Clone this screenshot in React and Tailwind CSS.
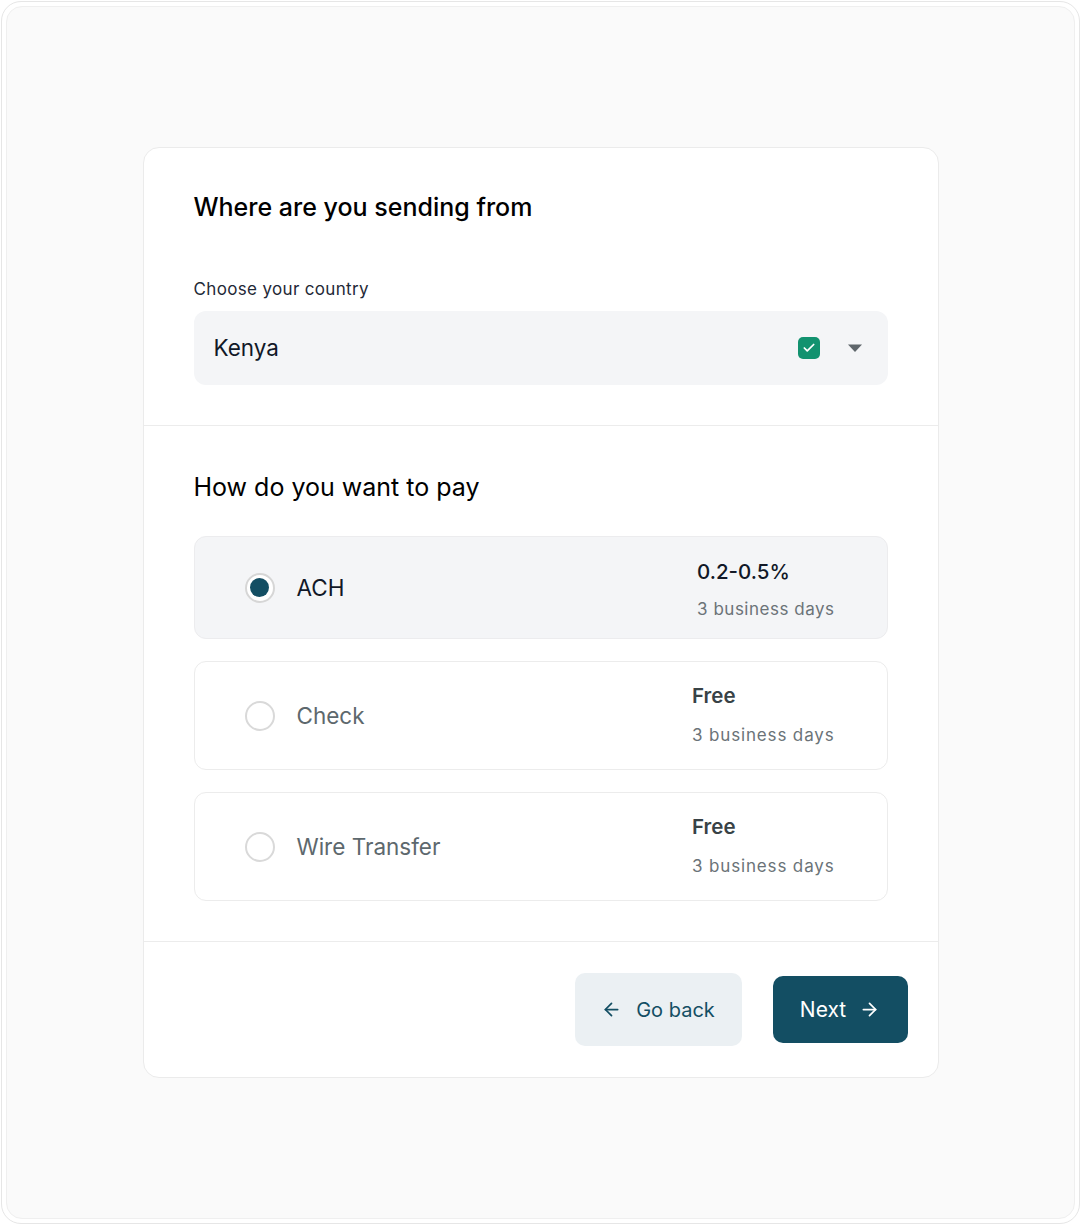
import { ArrowLeft, ArrowRight, Check } from 'lucide-react'

const METHODS = [
  { id: 'ach', label: 'ACH', fee: '0.2-0.5%', days: '3 business days', selected: true },
  { id: 'check', label: 'Check', fee: 'Free', days: '3 business days' },
  { id: 'wire', label: 'Wire Transfer', fee: 'Free', days: '3 business days' },
]

function Radio({ on }) {
  if (on) {
    return (
      <span className="flex items-center justify-center w-[30px] h-[30px] rounded-full border-2 border-[#d6d6d6] bg-white">
        <span className="w-[19px] h-[19px] rounded-full bg-[#134e63]" />
      </span>
    )
  }
  return <span className="w-[30px] h-[30px] rounded-full border-2 border-[#d9d9d9] bg-white" />
}

function MethodRow({ m }) {
  return (
    <div
      className={`flex items-center pl-[50px] pr-[52px] rounded-xl border ${
        m.selected ? 'h-[103px] bg-[#f4f5f7] border-[#ececee]' : 'h-[109px] bg-white border-[#ececec]'
      }`}
    >
      <Radio on={m.selected} />
      <span className={`ml-[22px] text-[22.5px] ${m.selected ? 'text-[#111827]' : 'text-[#5d686d]'}`}>
        {m.label}
      </span>
      <div className="flex-1" />
      <div className={`flex flex-col items-start whitespace-nowrap ${m.selected ? 'pt-[5px]' : ''}`}>
        <span
          className={`text-[20.5px] leading-[28px] ${
            m.selected ? 'text-[#111827] font-medium' : 'text-[#384246] font-semibold'
          }`}
        >
          {m.fee}
        </span>
        <span
          className={`text-[17px] text-[#6b7378] ${
            m.selected ? 'mt-[11px] tracking-[0.03em]' : 'mt-[13px] tracking-[0.05em]'
          }`}
        >
          {m.days}
        </span>
      </div>
    </div>
  )
}

export default function App() {
  return (
    <div className="w-[1081px] h-[1225px] bg-white p-[1px]" style={{ fontFamily: 'Inter, "Noto Sans", sans-serif' }}>
      <div className="h-full rounded-[20px] border border-[#e6e6e6] p-[4px] bg-white">
        <div className="h-full rounded-[16px] border border-[#efefef] bg-[#fafafa] flex items-center justify-center">
          {/* card */}
          <div className="w-[796px] bg-white rounded-[16px] border border-[#ebebeb] flex flex-col">

            {/* country */}
            <section className="px-[50px] pt-[43px] pb-[40px] border-b border-[#ececec]">
              <h2 className="text-[25px] leading-[32px] font-medium text-black">Where are you sending from</h2>
              <p className="mt-[55px] text-[17px] leading-[22px] tracking-[0.02em] text-[#1f2937]">Choose your country</p>
              <div className="mt-[11px] h-[74px] rounded-xl bg-[#f4f5f7] flex items-center pl-[20px] pr-[25px]">
                <span className="text-[22.5px] text-[#111827]">Kenya</span>
                <div className="flex-1" />
                <span className="w-[22px] h-[22px] rounded-[5px] bg-[#12926f] flex items-center justify-center">
                  <Check size={14} strokeWidth={3} className="text-white" />
                </span>
                <svg width="16" height="10" viewBox="0 0 16 10" className="ml-[27px]">
                  <path d="M1 1.5h14L8 9z" fill="#5f666b" />
                </svg>
              </div>
            </section>

            {/* method */}
            <section className="px-[50px] pt-[45px] pb-[40px] border-b border-[#ececec]">
              <h2 className="text-[25px] leading-[32px] text-black">How do you want to pay</h2>
              <div className="mt-[33px] flex flex-col gap-[22px]">
                {METHODS.map(m => <MethodRow key={m.id} m={m} />)}
              </div>
            </section>

            {/* footer */}
            <footer className="h-[135px] flex items-center justify-end pr-[30px] gap-[31px]">
              <button className="h-[73px] w-[167px] rounded-[10px] bg-[#ebf0f3] text-[#134e63] text-[20px] flex items-center justify-center gap-[14px]">
                <ArrowLeft size={21} strokeWidth={2} />
                Go back
              </button>
              <button className="h-[67px] w-[135px] rounded-[10px] bg-[#134e63] text-white text-[21px] flex items-center justify-center gap-[13px]">
                Next
                <ArrowRight size={21} strokeWidth={2} />
              </button>
            </footer>
          </div>
        </div>
      </div>
    </div>
  )
}
